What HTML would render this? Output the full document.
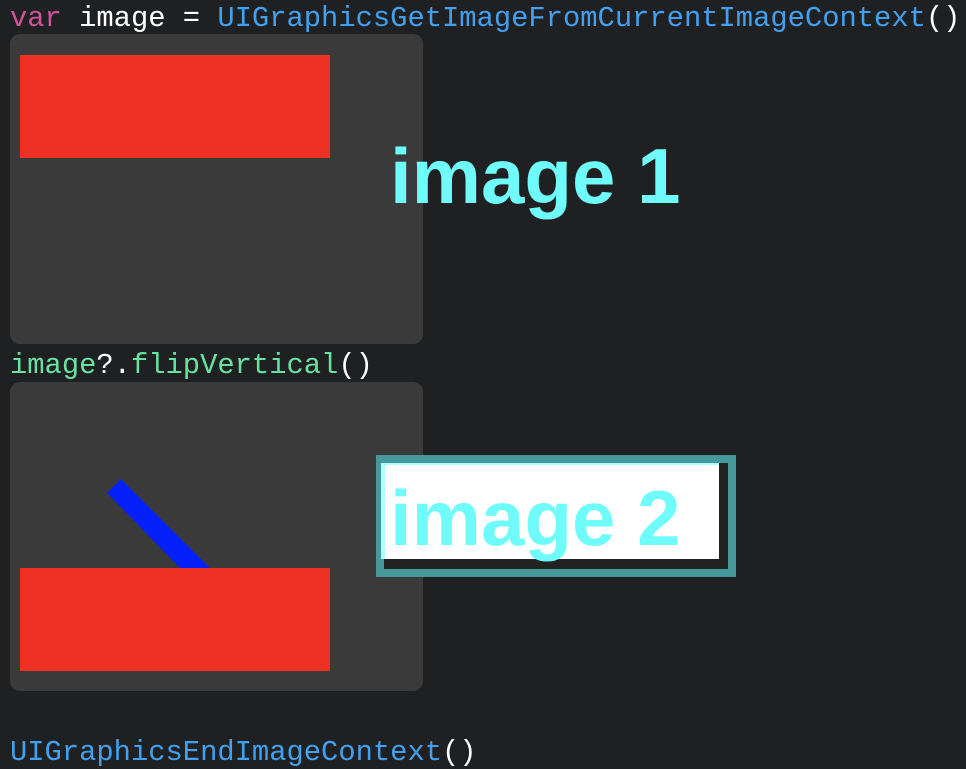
<!DOCTYPE html>
<html><head><meta charset="utf-8"><style>
body{margin:0;width:966px;height:766px;background:#1f2021;position:relative;overflow:hidden;font-family:"Liberation Mono",monospace;}
.code{position:absolute;left:10px;font-size:28.8px;line-height:1;white-space:pre;color:#fff}
.p{color:#d0509b}.b{color:#41a1f0}.g{color:#67e2a0}
.panel{position:absolute;left:10px;width:413px;background:#3a3a3a;border-radius:10px}
.red{position:absolute;left:20px;width:310px;height:103px;background:#ee3124}
.big{position:absolute;font-family:"Liberation Sans",Arial,sans-serif;font-weight:bold;font-size:78px;line-height:1;color:#70fbfb;white-space:pre}
</style></head><body>
<div class="code" style="top:5px"><span class="p">var</span> image = <span class="b">UIGraphicsGetImageFromCurrentImageContext</span>()</div>
<div class="panel" style="top:34px;height:310px"></div>
<div class="red" style="top:55px"></div>
<div class="big" style="left:390px;top:137px">image 1</div>
<div class="code" style="top:352px"><span class="g">image</span>?.<span class="g">flipVertical</span>()</div>
<div class="panel" style="top:382px;height:309px"></div>
<svg style="position:absolute;left:0;top:0" width="966" height="766"><polygon points="107,493 121,479 210,568 180,568" fill="#0520f8"/></svg>
<div class="red" style="top:568px"></div>
<div style="position:absolute;left:376px;top:455px;width:344px;height:106px;border:8px solid #46999a;background:#222"></div>
<div style="position:absolute;left:381px;top:463px;width:338px;height:96px;background:#fff;border-top:2px solid #b0ffff;border-left:4px solid #b0ffff;box-sizing:border-box"></div>
<div class="big" style="left:390px;top:479px">image 2</div>
<div class="code" style="top:739px"><span class="b">UIGraphicsEndImageContext</span>()</div>
</body></html>
